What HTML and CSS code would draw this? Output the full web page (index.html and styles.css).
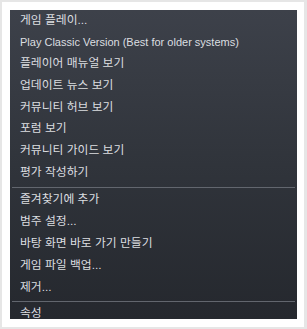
FILE: index.html
```html
<!DOCTYPE html>
<html lang="ko">
<head>
  <meta charset="UTF-8" />
  <title>게임 메뉴</title>
  <link rel="stylesheet" href="styles.css">
</head>
<body>

  <div class="panel">
    <div class="menu">
      <div class="group">
        <div class="item">게임 플레이...</div>
        <div class="item latin">Play Classic Version (Best for older systems)</div>
        <div class="item">플레이어 매뉴얼 보기</div>
        <div class="item">업데이트 뉴스 보기</div>
        <div class="item">커뮤니티 허브 보기</div>
        <div class="item">포럼 보기</div>
        <div class="item">커뮤니티 가이드 보기</div>
        <div class="item">평가 작성하기</div>
      </div>
      <div class="sep"></div>
      <div class="group wide">
        <div class="item">즐겨찾기에 추가</div>
        <div class="item">범주 설정...</div>
        <div class="item">바탕 화면 바로 가기 만들기</div>
        <div class="item">게임 파일 백업...</div>
        <div class="item">제거...</div>
      </div>
      <div class="sep"></div>
      <div class="group wide">
        <div class="item">속성</div>
      </div>
    </div>
  </div>

</body>
</html>
```

FILE: styles.css
```css
html, body {
  margin: 0;
  height: 100%;
}

body {
  background: #e6e6e6;
  padding: 2px 3px 2px 2px;
  box-sizing: border-box;
  font-family: "Liberation Sans", Arial, "Noto Sans CJK KR", sans-serif;
}

/* 흰 바탕 */
.panel {
  background: #ffffff;
  height: 100%;
  padding: 8px 7px 8px 8px;
  box-sizing: border-box;
}

/* 어두운 컨텍스트 메뉴 */
.menu {
  height: 100%;
  overflow: hidden;
  background: linear-gradient(180deg, #3d414a 0%, #30343b 50%, #25282e 100%);
  color: #dcdee0;
  font-size: 11.8px;
}

.item {
  height: 21.7px;
  line-height: 21.7px;
  padding-left: 10px;
  white-space: nowrap;
  cursor: default;
}

.item.latin {
  font-size: 11px;
}

.wide .item {
  height: 22px;
  line-height: 22px;
}

.item:hover {
  background: #4a5059;
}

.sep {
  height: 1px;
  margin: 3px 2px 0 2px;
  background: #62666e;
}
```
